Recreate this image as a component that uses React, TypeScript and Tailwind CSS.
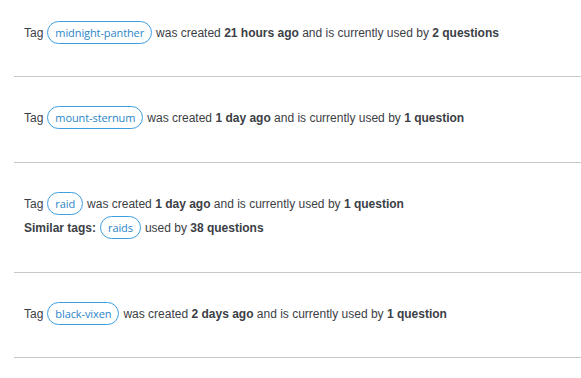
const rows = [
  { tag: "midnight-panther", age: "21 hours ago", used: "2 questions" },
  { tag: "mount-sternum", age: "1 day ago", used: "1 question" },
  { tag: "raid", age: "1 day ago", used: "1 question", similar: { tag: "raids", used: "38 questions" } },
  { tag: "black-vixen", age: "2 days ago", used: "1 question" },
];

const Tag = ({ name }: { name: string }) => (
  <span className="inline-flex items-center h-[23px] px-[7px] mx-[4px] rounded-full border border-[#3d9fe0] text-[#2a85c8] text-[11px] tracking-[-0.1px] font-['Open_Sans',sans-serif] leading-none">
    {name}
  </span>
);

export default function App() {
  return (
    <div className="w-[581px] h-[378px] bg-white text-[#3b4045] text-[12px] font-['Liberation_Sans',Arial,sans-serif] overflow-hidden">
      {rows.map((r, i) => (
        <div
          key={r.tag}
          className={
            "ml-[14px] pl-[10px] border-b border-[#c8c8c8] flex flex-col gap-[1px] " +
            (i === 0 ? "pt-[21px] pb-[32px]" : i === 3 ? "pt-[29px] pb-[32px]" : "pt-[29px] pb-[33px]")
          }
        >
          <div className="flex items-center h-[23px]">
            Tag<Tag name={r.tag} />was created&nbsp;<b>{r.age}</b>&nbsp;and is currently used by&nbsp;<b>{r.used}</b>
          </div>
          {r.similar && (
            <div className="flex items-center h-[23px]">
              <b>Similar tags:</b>
              <Tag name={r.similar.tag} />used by&nbsp;<b>{r.similar.used}</b>
            </div>
          )}
        </div>
      ))}
    </div>
  );
}
